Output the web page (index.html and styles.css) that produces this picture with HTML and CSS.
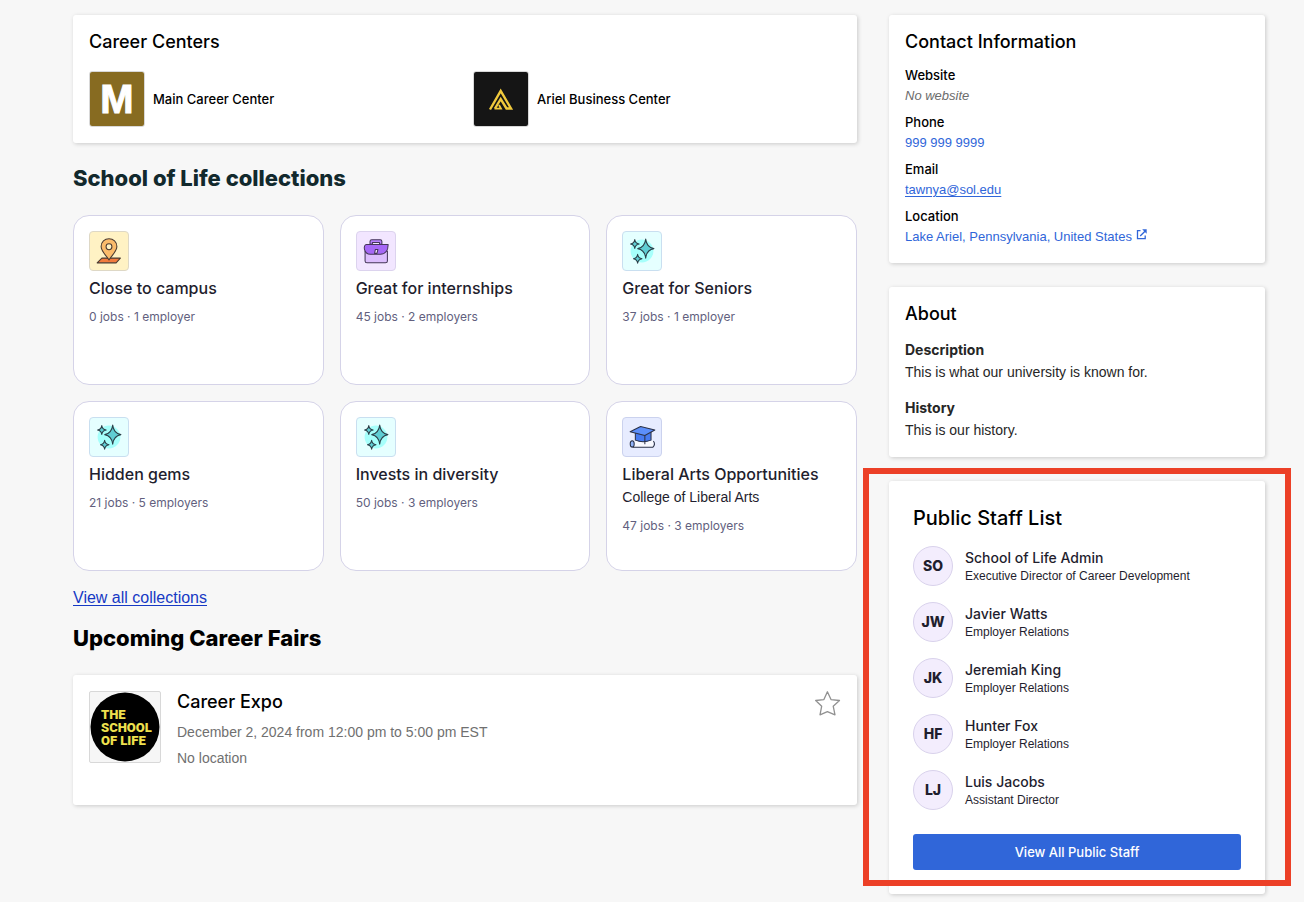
FILE: index.html
```html
<!DOCTYPE html>
<html lang="en">
<head>
<meta charset="utf-8">
<meta name="viewport" content="width=device-width, initial-scale=1">
<title>School of Life</title>
<link rel="stylesheet" href="styles.css">
</head>
<body>
<svg class="sprite" aria-hidden="true">
  <symbol id="sparkles" viewBox="0 0 40 40">
    <circle cx="20" cy="20" r="12" fill="#a6fffb"/>
    <g fill="#5fcdd3" stroke="#2c3f48" stroke-width="1.1" stroke-linejoin="round">
      <path d="M23.900 7.500C24.500 13 27 16.500 32.500 17.500C27 18.500 24.500 22 23.900 27.500C23.300 22 20.500 18.500 15.500 17.500C20.500 16.500 23.300 13 23.900 7.500Z"/>
      <path d="M12.400 8C12.800 11 14 12.200 17 12.700C14 13.200 12.800 14.500 12.400 17.400C12 14.500 10.800 13.200 8 12.700C10.800 12.200 12 11 12.400 8Z"/>
      <path d="M15.400 23.500C15.800 26.500 17 27.600 20 28.100C17 28.600 15.800 30 15.400 32.800C15 30 13.800 28.600 11 28.100C13.800 27.600 15 26.500 15.400 23.500Z"/>
    </g>
  </symbol>
</svg>
<div class="page">
  <main class="main">
    <section class="card">
      <h3 class="card-title">Career Centers</h3>
      <ul class="centers">
        <li class="center">
          <svg class="center-logo" viewBox="0 0 54 54" aria-hidden="true"><rect width="54" height="54" fill="#876b21"/><text class="logo-m" x="27" y="41" text-anchor="middle">M</text></svg>
          <span>Main Career Center</span>
        </li>
        <li class="center">
          <svg class="center-logo" viewBox="0 0 54 54" aria-hidden="true"><rect width="54" height="54" fill="#151515"/><g fill="none" stroke="#f0c93c" stroke-width="2.400"><path d="M16 37.500L26.700 19L37 36.500H32.500L26.700 27L21 36.500"/><path d="M20.500 36.700H27L25 33" stroke-width="1.800"/></g></svg>
          <span>Ariel Business Center</span>
        </li>
      </ul>
    </section>

    <section class="block">
      <h2 class="section-title section-title-teal">School of Life collections</h2>
      <ul class="collections">
        <li class="collection">
          <svg class="tile tile-yellow" viewBox="0 0 40 40" aria-hidden="true"><g transform="translate(-1 -1)" stroke="#4a3a32" stroke-width="1.100" stroke-linejoin="round"><path d="M13.500 28.500H33L28.500 33.500H8.500Z" fill="#f27b3d"/><path d="M21 30.500C18.500 26 12.700 21.500 12.700 16.300A8.300 8.300 0 0 1 29.300 16.300C29.300 21.500 23.500 26 21 30.500Z" fill="#fbbb6b"/><circle cx="21" cy="16.500" r="3.100" fill="#fff2c4"/></g></svg>
          <h4 class="collection-title">Close to campus</h4>
          <p class="meta">0 jobs · 1 employer</p>
        </li>
        <li class="collection">
          <svg class="tile tile-purple" viewBox="0 0 40 40" aria-hidden="true"><g stroke="#443658" stroke-width="1.100" stroke-linejoin="round"><path d="M13.700 13V10Q13.700 8.200 15.500 8.200H24.500Q26.200 8.200 26.200 10V13H23.700V11H16.200V13Z" fill="#b681fb"/><path d="M8.500 20V30.500Q8.500 32.300 10.500 32.300H30Q32 32.300 32 30.500V20Z" fill="#dcbefd"/><path d="M10 13.200H32.800C32.800 19 30 23.500 24.500 23.500H14C7 23.500 6 13.200 10 13.200Z" fill="#a668f6"/><path d="M19.300 18.500H22L21 22.500H18.500Z" fill="#f3e6ff"/></g></svg>
          <h4 class="collection-title">Great for internships</h4>
          <p class="meta">45 jobs · 2 employers</p>
        </li>
        <li class="collection">
          <svg class="tile tile-cyan" viewBox="0 0 40 40" aria-hidden="true"><use href="#sparkles"/></svg>
          <h4 class="collection-title">Great for Seniors</h4>
          <p class="meta">37 jobs · 1 employer</p>
        </li>
        <li class="collection">
          <svg class="tile tile-cyan" viewBox="0 0 40 40" aria-hidden="true"><use href="#sparkles"/></svg>
          <h4 class="collection-title">Hidden gems</h4>
          <p class="meta">21 jobs · 5 employers</p>
        </li>
        <li class="collection">
          <svg class="tile tile-cyan" viewBox="0 0 40 40" aria-hidden="true"><use href="#sparkles"/></svg>
          <h4 class="collection-title">Invests in diversity</h4>
          <p class="meta">50 jobs · 3 employers</p>
        </li>
        <li class="collection">
          <svg class="tile tile-blue" viewBox="0 0 40 40" aria-hidden="true"><g stroke="#2b3248" stroke-width="1.100" stroke-linejoin="round"><path d="M10 24H33Q31 27.500 33 30.500H10Z" fill="#f8f9ff" stroke="none"/><path d="M10 30.700H31.500Q34.500 27.500 32 24.200" fill="none"/><ellipse cx="9.700" cy="27.300" rx="2.100" ry="3.300" fill="#8fb2f9"/><path d="M13 15.500V23.300Q21 26.500 29.500 23.300V14.500Z" fill="#477bf0"/><path d="M7.500 14.400L18.500 9L33.500 12.600L23 18.500Z" fill="#5c8ffa"/><path d="M23 18.500V27.500" fill="none"/></g></svg>
          <h4 class="collection-title">Liberal Arts Opportunities</h4>
          <p class="subtitle">College of Liberal Arts</p>
          <p class="meta">47 jobs · 3 employers</p>
        </li>
      </ul>
      <a class="view-all" href="#collections">View all collections</a>
    </section>

    <section class="block-tight">
      <h2 class="section-title">Upcoming Career Fairs</h2>
      <article class="card fair">
        <svg class="fair-logo" viewBox="0 0 70 70" role="img" aria-label="The School of Life"><circle cx="35" cy="35" r="34.500" fill="#000"/><g class="logo-sol"><text x="11" y="27">THE</text><text x="11" y="40">SCHOOL</text><text x="11" y="53">OF LIFE</text></g></svg>
        <div class="fair-body">
          <h3 class="card-title fair-title">Career Expo</h3>
          <p class="fair-line">December 2, 2024 from 12:00 pm to 5:00 pm EST</p>
          <p class="fair-line">No location</p>
        </div>
        <button class="favorite" type="button" aria-label="Favorite Career Expo"><svg viewBox="0 0 26 26" aria-hidden="true"><path d="M12.400 .8L16 8.600L24.500 9.500L18.200 15.200L20 23.800L12.400 20.600L5 23.800L6.700 15.200L.7 9.500L8.900 8.600Z" fill="none" stroke="#919191" stroke-width="1.300" stroke-linejoin="round"/></svg></button>
      </article>
    </section>
  </main>

  <aside class="side">
    <section class="card">
      <h3 class="card-title">Contact Information</h3>
      <dl class="contact">
        <div><dt>Website</dt><dd class="empty">No website</dd></div>
        <div><dt>Phone</dt><dd><a class="plain" href="tel:9999999999">999 999 9999</a></dd></div>
        <div><dt>Email</dt><dd><a href="mailto:tawnya@sol.edu">tawnya@sol.edu</a></dd></div>
        <div><dt>Location</dt><dd><a class="plain" href="#map">Lake Ariel, Pennsylvania, United States <svg class="external" viewBox="0 0 11 11" aria-hidden="true"><path d="M4.500 1.700H1.500V9.700H9.200V6.500M4.200 7L9 2.200" fill="none" stroke="currentColor" stroke-width="1.300"/><path d="M6.200 .3H10.700V4.800Z" fill="currentColor"/></svg></a></dd></div>
      </dl>
    </section>

    <section class="card">
      <h3 class="card-title">About</h3>
      <dl class="about">
        <div><dt>Description</dt><dd>This is what our university is known for.</dd></div>
        <div><dt>History</dt><dd>This is our history.</dd></div>
      </dl>
    </section>

    <section class="card staff-card">
      <h3 class="staff-heading">Public Staff List</h3>
      <ul class="staff">
        <li><span class="avatar">SO</span><div><p class="name">School of Life Admin</p><p class="role">Executive Director of Career Development</p></div></li>
        <li><span class="avatar">JW</span><div><p class="name">Javier Watts</p><p class="role">Employer Relations</p></div></li>
        <li><span class="avatar">JK</span><div><p class="name">Jeremiah King</p><p class="role">Employer Relations</p></div></li>
        <li><span class="avatar">HF</span><div><p class="name">Hunter Fox</p><p class="role">Employer Relations</p></div></li>
        <li><span class="avatar">LJ</span><div><p class="name">Luis Jacobs</p><p class="role">Assistant Director</p></div></li>
      </ul>
      <button class="primary" type="button">View All Public Staff</button>
      <div class="highlight" aria-hidden="true"></div>
    </section>
  </aside>
</div>
</body>
</html>
```
FILE: styles.css
```css
* { box-sizing: border-box; }
body {
  margin: 0;
  background: #f7f7f7;
  color: #000;
  font-family: "Liberation Sans", Arial, sans-serif;
  font-size: 13px;
}
h2, h3, h4, p, ul, dl, dd { margin: 0; padding: 0; }
h2, h3, h4, dt, .center, .avatar, .name { font-family: Inter, "Liberation Sans", sans-serif; }
ul { list-style: none; }
.sprite { position: absolute; width: 0; height: 0; }

.page {
  display: grid;
  grid-template-columns: minmax(0, 1fr) 376px;
  gap: 32px;
  padding: 15px 39px 8px 73px;
}
.side { display: flex; flex-direction: column; gap: 24px; }

.card {
  background: #fff;
  border-radius: 3px;
  padding: 16px;
  box-shadow: 1px 1px 4px rgba(0, 0, 0, 0.18);
}
.card-title { font-size: 18px; font-weight: 500; line-height: 22px; }

.centers { display: grid; grid-template-columns: 1fr 1fr; gap: 16px; margin-top: 18px; }
.center { display: flex; align-items: center; gap: 8px; font-weight: 500; }
.center-logo { width: 56px; height: 56px; border: 1px solid #d8d8d8; border-radius: 3px; }
.logo-m { font: bold 40px "Liberation Sans", sans-serif; fill: #fff; stroke: #fff; stroke-width: 1px; }

.block { margin-top: 21px; }
.block-tight { margin-top: 15px; }
.section-title { font-size: 22px; font-weight: 800; line-height: 28px; margin-bottom: 23px; }
.section-title-teal { color: #12292d; }

.collections { display: grid; grid-template-columns: repeat(3, minmax(0, 1fr)); gap: 16px; }
.collection {
  min-height: 170px;
  padding: 15px;
  background: #fff;
  border: 1px solid #d5d3e8;
  border-radius: 16px;
  color: #1f1e2e;
}
.tile { display: block; width: 40px; height: 40px; border: 1px solid; border-radius: 4px; }
.tile-yellow { background: #fff2c4; border-color: #ded8c6; }
.tile-purple { background: #f2e6ff; border-color: #dcd3ee; }
.tile-cyan { background: #e5ffff; border-color: #c9dff0; }
.tile-blue { background: #e7ecff; border-color: #cbd2ee; }
.collection-title { margin-top: 5px; font-size: 16px; font-weight: 500; line-height: 24px; }
.subtitle { font-size: 14px; line-height: 23px; }
.meta { margin-top: 8px; font-family: Inter, "Liberation Sans", sans-serif; font-size: 12px; line-height: 18px; color: #625f7e; }
.view-all { display: block; width: fit-content; margin-top: 16px; font-size: 16px; line-height: 22px; color: #1639c4; text-underline-offset: 2px; }

.fair { display: flex; gap: 16px; padding-bottom: 34px; }
.fair-logo { flex: none; width: 72px; height: 72px; background: #f6f6f6; border: 1px solid #d8d8d8; border-radius: 2px; }
.logo-sol { font: 900 13px Roboto, sans-serif; fill: #eee04e; }
.fair-body { flex: 1; }
.fair-title { margin-bottom: 6px; }
.fair-line { font-size: 14px; line-height: 26px; color: #707070; }
.favorite { align-self: flex-start; width: 26px; height: 26px; padding: 0; border: 0; background: none; }
.favorite svg { display: block; width: 26px; height: 26px; }

.contact { display: grid; gap: 6px; margin-top: 12px; }
.contact dt { font-weight: 500; line-height: 21px; }
.contact dd { line-height: 20px; }
.contact a { color: #3066d9; text-underline-offset: 2px; }
.contact .plain { text-decoration: none; }
.contact .empty { color: #6c6c6c; font-style: italic; }
.external { width: 11px; height: 11px; vertical-align: 1px; }

.about { display: grid; gap: 14px; margin-top: 14px; font-size: 14px; line-height: 22px; color: #262626; }
.about dt { font-weight: 700; }

.staff-card { position: relative; padding: 24px; }
.staff-heading { font-size: 20px; font-weight: 500; line-height: 26px; }
.staff { display: grid; gap: 16px; margin: 15px 0 24px; color: #1f1e2e; }
.staff li { display: flex; align-items: center; gap: 12px; line-height: 18px; }
.avatar {
  display: flex;
  align-items: center;
  justify-content: center;
  width: 40px;
  height: 40px;
  border: 1px solid #d9d2ec;
  border-radius: 50%;
  background: #f3edfd;
  font-size: 14px;
  font-weight: 800;
}
.name { padding-top: 1px; font-size: 14px; font-weight: 500; }
.role { font-size: 12px; }
.primary {
  display: block;
  width: 100%;
  height: 36px;
  border: 0;
  border-radius: 3px;
  background: #3066d9;
  color: #fff;
  font: 500 13px Inter, "Liberation Sans", sans-serif;
}
.highlight {
  position: absolute;
  inset: -13px -26px 8px;
  border: 6px solid #ec4027;
  pointer-events: none;
}

@media (max-width: 900px) {
  .page { grid-template-columns: minmax(0, 1fr); padding: 15px 32px; }
}
```
